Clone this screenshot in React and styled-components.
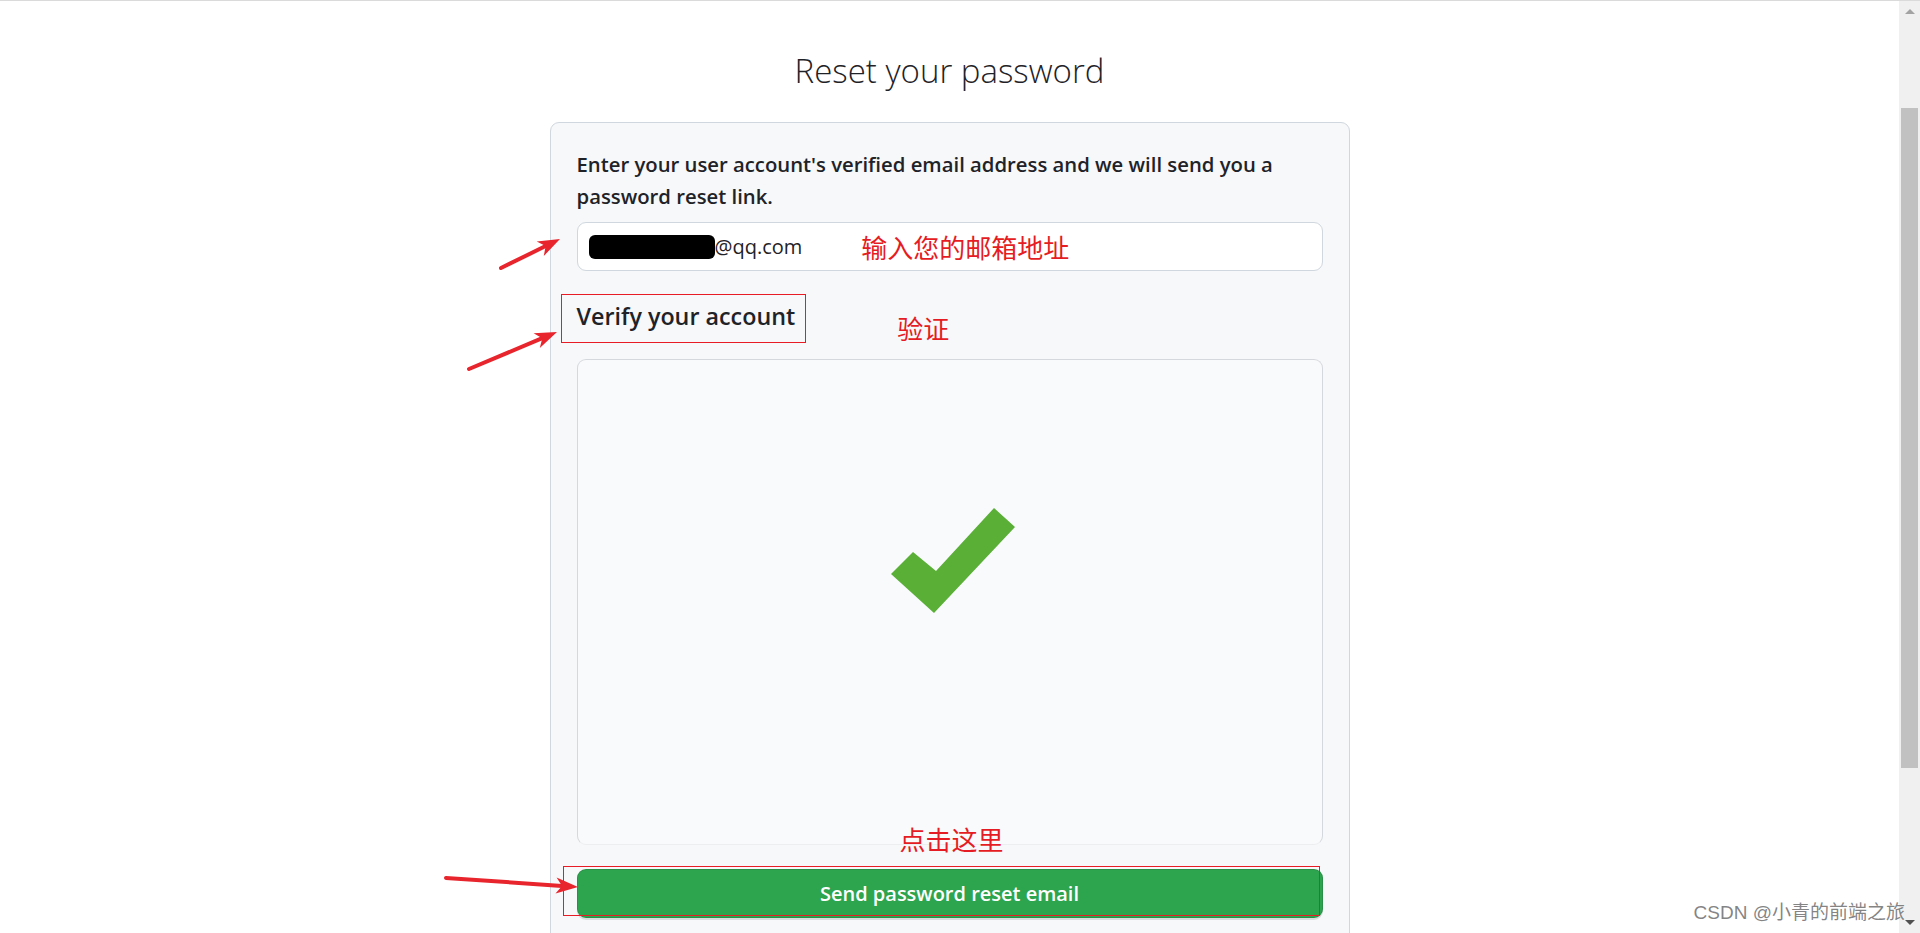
import styled, { createGlobalStyle } from 'styled-components';

const GlobalStyle = createGlobalStyle`
  html, body {
    margin: 0;
    padding: 0;
    background: #fff;
    overflow: hidden;
  }
  body {
    font-family: "Segoe UI", "Open Sans", "Noto Sans", sans-serif;
    color: #1f2328;
  }
`

const Page = styled.div`
  position: relative;
  display: flex;
  height: 933px;
  box-sizing: border-box;
  border-top: 1px solid #dadada;
  overflow: hidden;
`
const Main = styled.main`
  position: relative;
  flex: 1;
  display: flex;
  flex-direction: column;
  align-items: center;
  padding-top: 43px;
`
const Title = styled.h1`
  margin: 0 0 24px;
  font-size: 33px;
  font-weight: 300;
  line-height: 54px;
  color: #1f2328;
`
const Card = styled.div`
  width: 800px;
  box-sizing: border-box;
  padding: 26px 26px 40px;
  background: #f6f8fa;
  border: 1px solid #d0d7de;
  border-radius: 9px;
  display: flex;
  flex-direction: column;
`
const Lead = styled.p`
  margin: 0 0 10px;
  font-size: 20.3px;
  font-weight: 600;
  line-height: 31.5px;
`
const EmailField = styled.div`
  height: 49px;
  box-sizing: border-box;
  display: flex;
  align-items: center;
  padding: 0 11px;
  background: #fff;
  border: 1px solid #d0d7de;
  border-radius: 9px;
`
const Redacted = styled.span`
  width: 126px;
  height: 24px;
  border-radius: 6px;
  background: #000;
`
const EmailText = styled.span`
  font-size: 20px;
  color: #1f2328;
`
const Note = styled.span`
  font-family: "Noto Sans CJK SC", sans-serif;
  font-size: 26px;
  line-height: 31px;
  color: #e51c23;
  margin-left: ${p => p.gap || 0}px;
  margin-top: ${p => p.top || 0}px;
`
const HeadingRow = styled.div`
  display: flex;
  align-items: flex-start;
  height: 49px;
  margin-top: 23px;
`
const Marked = styled.div`
  height: 49px;
  box-sizing: border-box;
  display: flex;
  align-items: center;
  margin-left: -16px;
  padding: 0 10px 3px 15px;
  border: 1px solid #e81c24;
`
const Heading = styled.h2`
  margin: 0;
  font-size: 23.3px;
  font-weight: 600;
  line-height: 1;
`
const CaptchaWrap = styled.div`
  position: relative;
  margin-top: 16px;
`
const CaptchaFrame = styled.div`
  height: 486px;
  box-sizing: border-box;
  display: flex;
  align-items: center;
  justify-content: center;
  padding: 0 0 83px 6px;
  background: #f9fafb;
  border: 1px solid #d5d8dc;
  border-bottom-color: #eceef0;
  border-radius: 9px;
`
const ClickHint = styled(Note)`
  position: absolute;
  left: 50%;
  top: 464px;
  transform: translateX(-48%);
`
const ButtonWrap = styled.div`
  position: relative;
  margin-top: 24px;
`
const SubmitButton = styled.button`
  width: 100%;
  height: 49px;
  border: 1px solid rgba(27, 31, 36, 0.15);
  border-radius: 9px;
  background: #2da44e;
  box-shadow: 0 2px 0 rgba(27, 31, 36, 0.12);
  color: #fff;
  font-family: inherit;
  font-size: 20px;
  font-weight: 600;
`
const ButtonMark = styled.div`
  position: absolute;
  left: -14px;
  top: -3px;
  width: 757px;
  height: 50px;
  box-sizing: border-box;
  border: 1px solid #e81c24;
  pointer-events: none;
`
const Overlay = styled.svg`
  position: absolute;
  left: 0;
  top: 0;
  width: 100%;
  height: 100%;
  pointer-events: none;
`
const ScrollTrack = styled.div`
  width: 21px;
  flex-shrink: 0;
  display: flex;
  flex-direction: column;
  align-items: center;
  background: #f0f0f0;
`
const ScrollArrow = styled.div`
  height: 21px;
  display: flex;
  align-items: center;
  justify-content: center;
  margin-top: ${p => (p.down ? 'auto' : '0')};
  &::before {
    content: '';
    border-left: 5px solid transparent;
    border-right: 5px solid transparent;
    ${p => (p.down ? 'border-top: 5px solid #505050;' : 'border-bottom: 5px solid #a3a3a3;')}
  }
`
const Thumb = styled.div`
  width: 17px;
  height: 660px;
  margin-top: 86px;
  background: #c1c1c1;
`
const Watermark = styled.div`
  position: absolute;
  right: 15px;
  bottom: 8px;
  font-family: "Liberation Sans", "Noto Sans CJK SC", sans-serif;
  font-size: 19px;
  line-height: 24px;
  color: rgba(110, 110, 110, 0.85);
  pointer-events: none;
`

const Arrow = ({ x1, y1, x2, y2 }) => {
  const a = Math.atan2(y2 - y1, x2 - x1);
  const len = 22;
  const half = 8;
  const bx = x2 - len * Math.cos(a);
  const by = y2 - len * Math.sin(a);
  const px = -Math.sin(a) * half;
  const py = Math.cos(a) * half;
  const nx = x2 - (len - 6) * Math.cos(a);
  const ny = y2 - (len - 6) * Math.sin(a);
  return (
    <g>
      <line x1={x1} y1={y1} x2={nx} y2={ny} stroke="#e8242c" strokeWidth="4" strokeLinecap="round" />
      <polygon
        points={`${x2},${y2} ${bx + px},${by + py} ${nx},${ny} ${bx - px},${by - py}`}
        fill="#e8242c"
      />
    </g>
  );
};

const CheckMark = () => (
  <svg width="124" height="105" viewBox="0 0 124 105">
    <polygon points="0,66 22,44 45,63 103,0 124,19 43,105" fill="#5aaf37" />
  </svg>
);

const App = () => {
  return (
    <>
      <GlobalStyle />
      <Page>
        <Main>
          <Title>Reset your password</Title>
          <Card>
            <Lead>
              Enter your user account's verified email address and we will send you a password reset link.
            </Lead>
            <EmailField>
              <Redacted />
              <EmailText>@qq.com</EmailText>
              <Note gap={59}>输入您的邮箱地址</Note>
            </EmailField>
            <HeadingRow>
              <Marked>
                <Heading>Verify your account</Heading>
              </Marked>
              <Note gap={91} top={18}>验证</Note>
            </HeadingRow>
            <CaptchaWrap>
              <CaptchaFrame>
                <CheckMark />
              </CaptchaFrame>
              <ClickHint>点击这里</ClickHint>
            </CaptchaWrap>
            <ButtonWrap>
              <SubmitButton type="button">Send password reset email</SubmitButton>
              <ButtonMark />
            </ButtonWrap>
          </Card>
          <Overlay>
            <Arrow x1={501} y1={267} x2={560} y2={238} />
            <Arrow x1={469} y1={368} x2={557} y2={331} />
            <Arrow x1={446} y1={877} x2={578} y2={886} />
          </Overlay>
        </Main>
        <ScrollTrack>
          <ScrollArrow />
          <Thumb />
          <ScrollArrow down />
        </ScrollTrack>
        <Watermark>CSDN @小青的前端之旅</Watermark>
      </Page>
    </>
  );
};

export default App;
